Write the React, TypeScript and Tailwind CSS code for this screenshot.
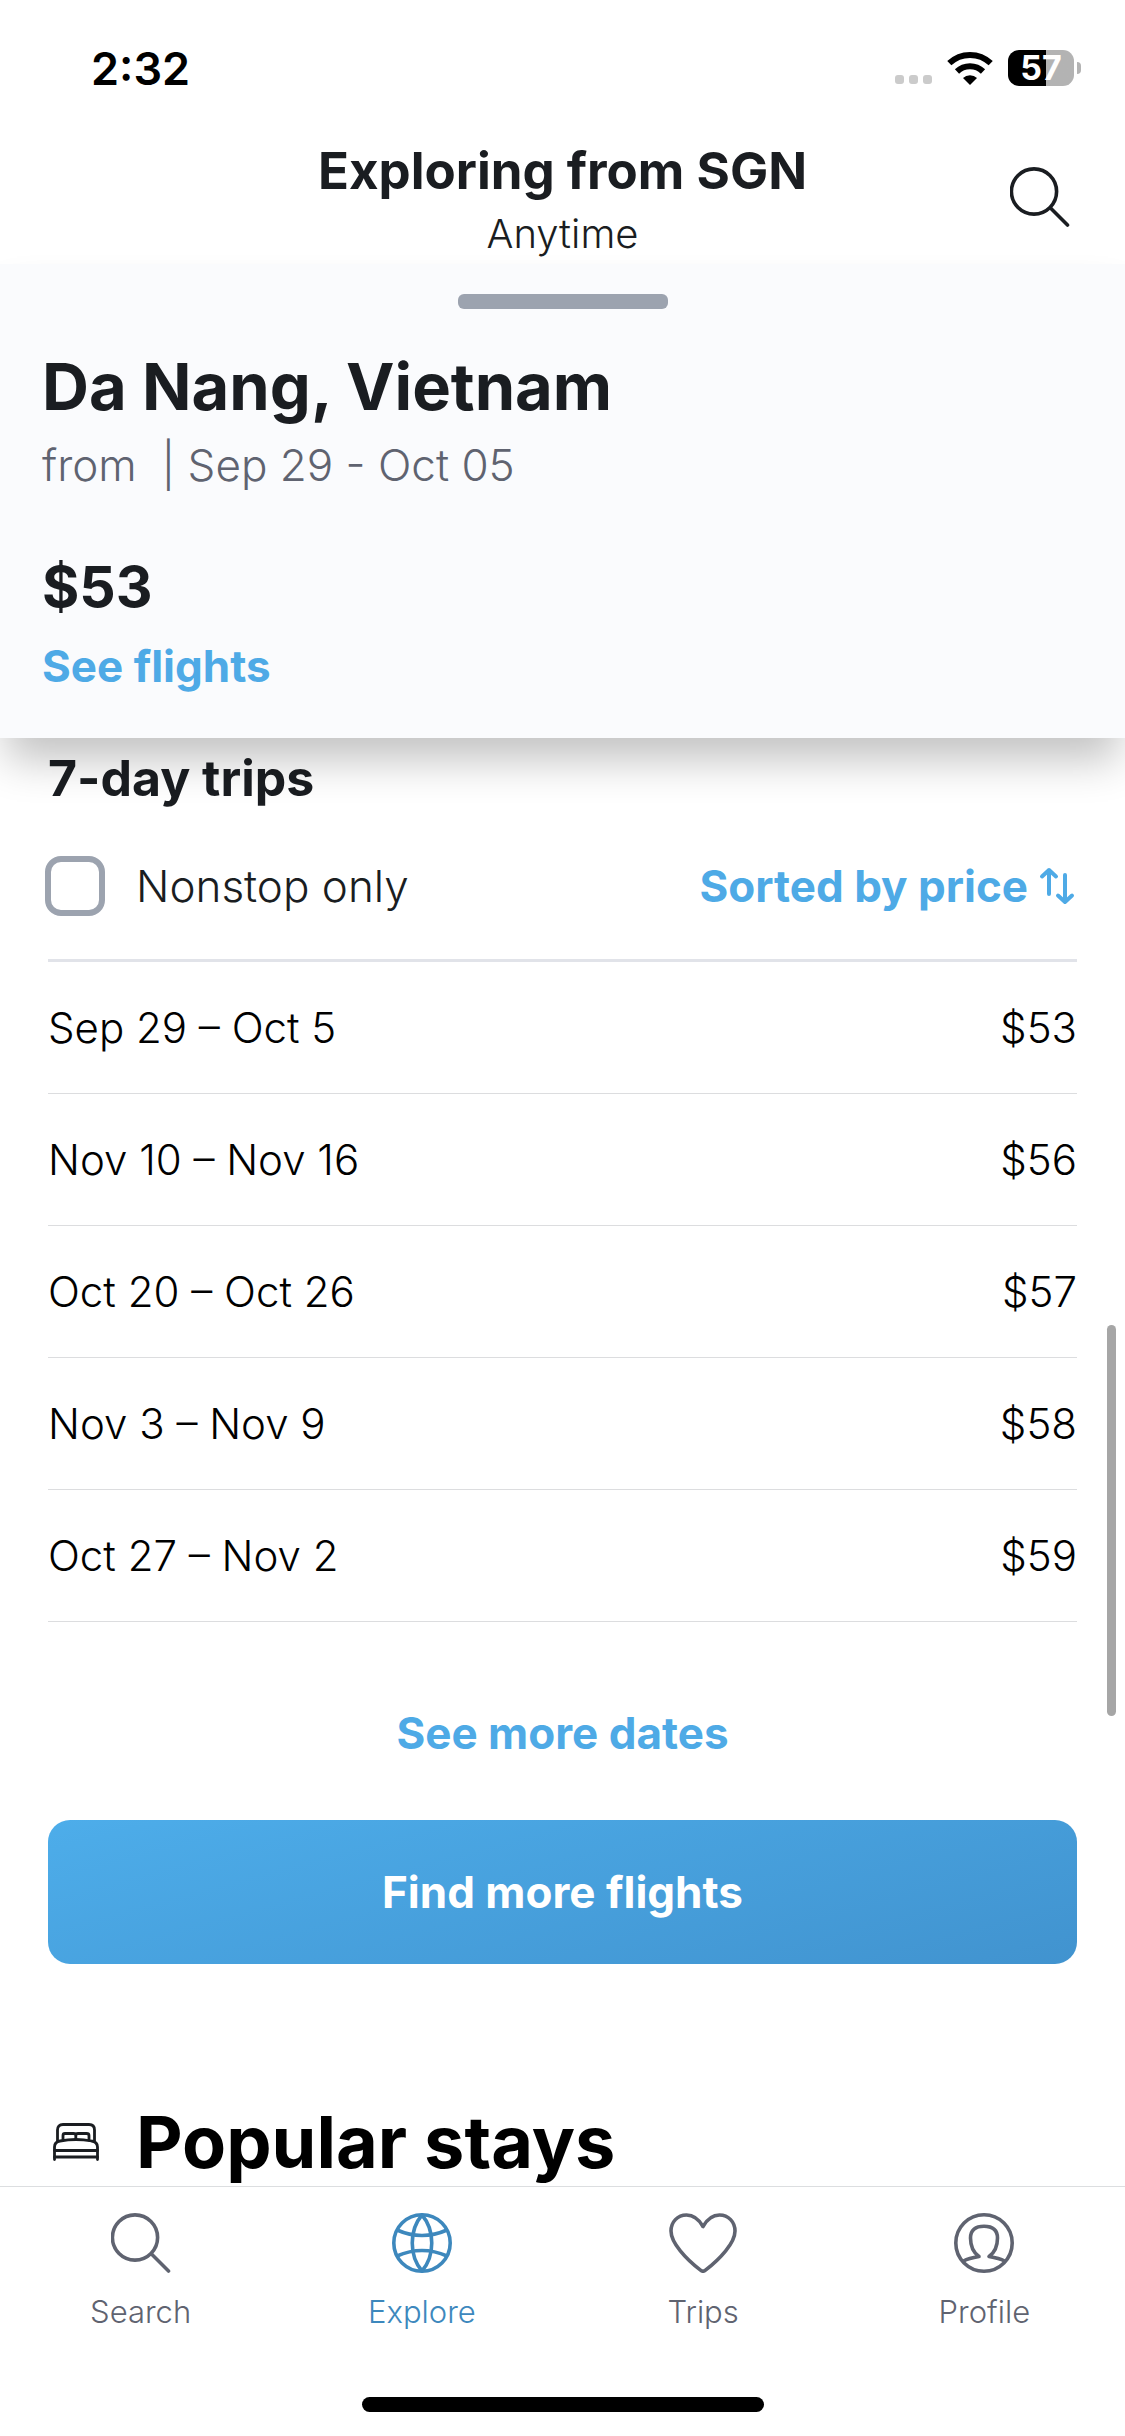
import React from "react";

const trips = [
  { dates: "Sep 29 – Oct 5", price: "$53" },
  { dates: "Nov 10 – Nov 16", price: "$56" },
  { dates: "Oct 20 – Oct 26", price: "$57" },
  { dates: "Nov 3 – Nov 9", price: "$58" },
  { dates: "Oct 27 – Nov 2", price: "$59" },
];

function SearchIcon() {
  return (
    <svg viewBox="0 0 60 60" className="size-[60px]" fill="none" stroke="currentColor" strokeWidth="3.6" strokeLinecap="round" aria-hidden="true">
      <circle cx="24" cy="24.5" r="22.6" />
      <path d="M40.5 41 57.5 58" />
    </svg>
  );
}

function GlobeIcon() {
  return (
    <svg viewBox="0 0 60 60" className="size-[60px]" fill="none" stroke="currentColor" strokeWidth="3.6" strokeLinejoin="round" aria-hidden="true">
      <circle cx="30" cy="30" r="28.2" />
      <path d="M30 2C17 17 17 43 30 58C43 43 43 17 30 2Z" />
      <path d="M5 17Q30 28 55 17M5 43Q30 32 55 43" />
    </svg>
  );
}

function HeartIcon() {
  return (
    <svg viewBox="0 0 68 60" className="h-[60px] w-[68px]" fill="none" stroke="currentColor" strokeWidth="3.6" strokeLinejoin="round" aria-hidden="true">
      <path d="M34 13.5C30 6.5 24.5 2 17.5 2C8.5 2 2 9 2 18C2 30 17 46 31.5 57.2Q34 59.2 36.5 57.2C51 46 66 30 66 18C66 9 59.5 2 50.5 2C43.5 2 38 6.5 34 13.5Z" />
    </svg>
  );
}

function ProfileIcon() {
  return (
    <svg viewBox="0 0 60 60" className="size-[60px]" fill="none" stroke="currentColor" strokeWidth="3.6" strokeLinecap="round" strokeLinejoin="round" aria-hidden="true">
      <circle cx="30" cy="30" r="28.2" />
      <path d="M9.5 48C14 45.5 19 44.5 25 43.5C18.5 39 16.5 33 16.5 25C16.5 17 21.5 13.2 30 13.2S43.5 17 43.5 25C43.5 33 41.5 39 35 43.5C41 44.5 46 45.5 50.5 48" />
    </svg>
  );
}

function BedIcon() {
  return (
    <svg viewBox="0 0 46 38" className="h-[38px] w-[46px] shrink-0" fill="none" stroke="#1a1d21" strokeWidth="2.8" strokeLinecap="round" strokeLinejoin="round" aria-hidden="true">
      <path d="M4.5 18V7Q4.5 1.5 10 1.5H36Q41.5 1.5 41.5 7V18" />
      <path d="M10 17V12.5Q10 10.5 12 10.5H20.5Q22.8 10.5 22.8 12.5V16.5M22.8 12.5Q22.8 10.5 25 10.5H33.5Q36 10.5 36 12.5V17" />
      <path d="M1.5 36.5V24Q1.5 19 7 18Q23 15 38.5 18Q44.5 19 44.5 24V36.5" />
      <path d="M1.5 27.5H44.5M1.5 34H44.5" />
    </svg>
  );
}

function WifiIcon() {
  return (
    <svg viewBox="0 0 46 34" className="h-[34px] w-[46px]" aria-hidden="true">
      <g fill="none" stroke="#000" strokeWidth="6">
        <path d="M2.3 12.2A30 30 0 0 1 43.7 12.2" />
        <path d="M10 20.5A18.5 18.5 0 0 1 36 20.5" />
      </g>
      <path d="M23 34 16 27A10 10 0 0 1 30 27Z" />
    </svg>
  );
}

function StatusBar() {
  return (
    <div className="flex h-36 shrink-0 items-center justify-between pr-11 pb-2 pl-[91px]">
      <span className="text-[45px] leading-none font-semibold text-black">2:32</span>
      <div className="flex items-center">
        <div className="flex gap-[5px] self-end pb-[2px]">
          <i className="size-[9px] rounded-[3px] bg-[#cbcbcb]" />
          <i className="size-[9px] rounded-[3px] bg-[#cbcbcb]" />
          <i className="size-[9px] rounded-[3px] bg-[#cbcbcb]" />
        </div>
        <div className="ml-[15px]">
          <WifiIcon />
        </div>
        <div className="ml-[15px] flex h-9 w-[66px] items-center justify-center rounded-[11px] bg-linear-to-r from-black from-57% to-[#b3b3b3] to-57% text-[34px] leading-none font-bold text-white">
          57
        </div>
        <i className="ml-[3px] h-3 w-1 rounded-r-full bg-[#b3b3b3]" />
      </div>
    </div>
  );
}

const tabs = [
  { label: "Search", icon: <SearchIcon />, color: "text-[#5f6370]" },
  { label: "Explore", icon: <GlobeIcon />, color: "text-[#3d88bd]" },
  { label: "Trips", icon: <HeartIcon />, color: "text-[#5f6370]" },
  { label: "Profile", icon: <ProfileIcon />, color: "text-[#5f6370]" },
];

export default function App() {
  return (
    <div className="relative flex min-h-screen flex-col bg-white font-[Inter,'Liberation_Sans',sans-serif] text-[#1a1d21]">
      <StatusBar />

      <header className="flex h-30 shrink-0 items-start justify-between px-[55px]">
        <div className="w-[60px]" />
        <div className="text-center">
          <h1 className="text-[51px] leading-[54px] font-bold">Exploring from SGN</h1>
          <p className="mt-[6px] text-[40px] leading-[60px] font-light">Anytime</p>
        </div>
        <button type="button" aria-label="Search" className="mt-[23px]">
          <SearchIcon />
        </button>
      </header>

      <section className="relative z-10 flex h-[474px] shrink-0 flex-col items-start bg-[#fafbfd] px-[42px] shadow-[0_28px_40px_-6px_rgba(0,0,0,0.24)]">
        <div className="mt-[30px] h-[15px] w-[210px] self-center rounded-md bg-[#9ca3af]" />
        <h2 className="mt-[42px] text-[65px] leading-[72px] font-bold">Da Nang, Vietnam</h2>
        <p className="mt-3 text-[44px] leading-[60px] font-light whitespace-pre text-[#5f6370]">from  | Sep 29 - Oct 05</p>
        <p className="mt-14 text-[57px] leading-[72px] font-bold">$53</p>
        <a href="#flights" className="mt-[18px] text-[44px] leading-[50px] font-bold text-[#4eaae6]">See flights</a>
      </section>

      <main className="flex flex-1 flex-col px-12">
        <h2 className="mt-3 text-[50px] leading-[56px] font-bold">7-day trips</h2>
        <div className="mt-[50px] flex h-[60px] items-center justify-between">
          <label className="-ml-[3px] flex items-center gap-[31px] text-[44px] font-light">
            <input type="checkbox" className="size-[60px] appearance-none rounded-[16px] border-[6px] border-[#9ca3af] bg-white" />
            Nonstop only
          </label>
          <button type="button" className="flex items-center gap-[11px] text-[44px] font-bold text-[#4eaae6]">
            Sorted by price
            <svg viewBox="0 0 38 38" className="h-[38px] w-[38px]" fill="none" stroke="currentColor" strokeWidth="4" strokeLinecap="round" strokeLinejoin="round" aria-hidden="true">
              <path d="M10 27V3M3 9.5 10 3 17 9.5M26 8V35M19 28.5 26 35 33 28.5" />
            </svg>
          </button>
        </div>
        <table className="mt-[43px] w-full border-separate border-spacing-0 border-t-[3px] border-[#e1e3e9] text-[42px] font-light text-black">
          <tbody>
            {trips.map((trip) => (
              <tr key={trip.dates} className="h-[132px]">
                <td className="border-b border-[#dcdddf]">{trip.dates}</td>
                <td className="border-b border-[#dcdddf] text-right">{trip.price}</td>
              </tr>
            ))}
          </tbody>
        </table>
        <button type="button" className="mt-[86px] self-center text-[44px] leading-[50px] font-bold text-[#4eaae6]">See more dates</button>
        <button type="button" className="mt-[62px] h-36 shrink-0 rounded-[22px] bg-linear-165 from-[#4dadea] to-[#4193cf] text-[44px] font-bold text-white">
          Find more flights
        </button>
        <div className="mt-[138px] flex shrink-0 items-center gap-[37px] pl-[5px] text-black">
          <BedIcon />
          <h2 className="text-[72px] leading-[80px] font-bold">Popular stays</h2>
        </div>
      </main>

      <div className="absolute top-[1325px] right-[9px] z-20 h-[391px] w-[9px] rounded-full bg-[#a6a6a6]" />

      <footer className="flex h-[250px] shrink-0 flex-col items-center border-t border-[#dcdee0]">
        <nav className="grid w-full grid-cols-4">
          {tabs.map((tab) => (
            <a key={tab.label} href={"#" + tab.label.toLowerCase()} className={"flex flex-col items-center pt-[26px] text-[31px] leading-10 font-light " + tab.color}>
              {tab.icon}
              <span className="mt-[19px]">{tab.label}</span>
            </a>
          ))}
        </nav>
        <div className="mt-[65px] h-[15px] w-[402px] rounded-full bg-black" />
      </footer>
    </div>
  );
}
